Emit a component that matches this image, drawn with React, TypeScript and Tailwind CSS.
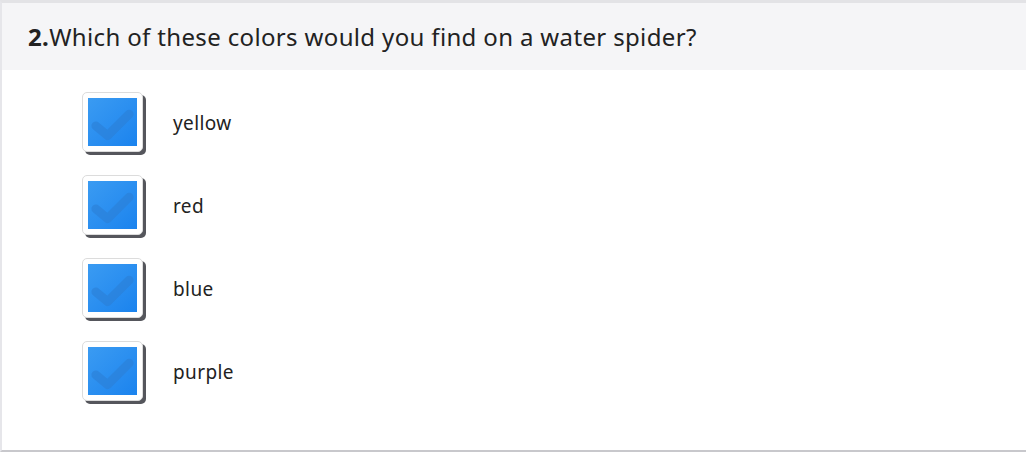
const options = ["yellow", "red", "blue", "purple"];

function CheckBox() {
  return (
    <div className="relative w-[64px] h-[63px]">
      <div className="absolute left-[3px] top-[3px] w-[61px] h-[60px] rounded-[5px] bg-[#55565c]" />
      <div className="absolute left-0 top-0 w-[61px] h-[60px] rounded-[5px] bg-white border border-[#dcdcdc] p-[5px]">
        <div className="relative w-full h-full bg-gradient-to-br from-[#3a9bf2] to-[#1a83ee]">
          <svg viewBox="0 0 50 48" className="absolute inset-0 w-full h-full">
            <path d="M8 28 L20 38 L42 16" fill="none" stroke="#2b7fd6" strokeWidth="9" strokeLinecap="round" strokeLinejoin="round" opacity="0.6" />
          </svg>
        </div>
      </div>
    </div>
  );
}

export default function App() {
  return (
    <div className="w-[1026px] h-[454px] bg-white" style={{ fontFamily: "'Noto Sans', sans-serif" }}>
      <div className="h-[452px] border-t-[3px] border-t-[#e3e3e6] border-l-2 border-l-[#e6e6ea] border-b-2 border-b-[#c8c8cc] flex flex-col">
        <div className="h-[67px] bg-[#f5f5f7] flex items-center pl-[26px] text-[24px] tracking-[0.35px] text-[#222]">
          <span className="font-bold">2.</span>
          <span>Which of these colors would you find on a water spider?</span>
        </div>
        <div className="flex flex-col gap-[20px] pt-[22px] pl-[80px]">
          {options.map((o) => (
            <div key={o} className="flex items-center">
              <CheckBox />
              <span className="ml-[27px] text-[19px] tracking-[0.4px] text-[#222]">{o}</span>
            </div>
          ))}
        </div>
      </div>
    </div>
  );
}
